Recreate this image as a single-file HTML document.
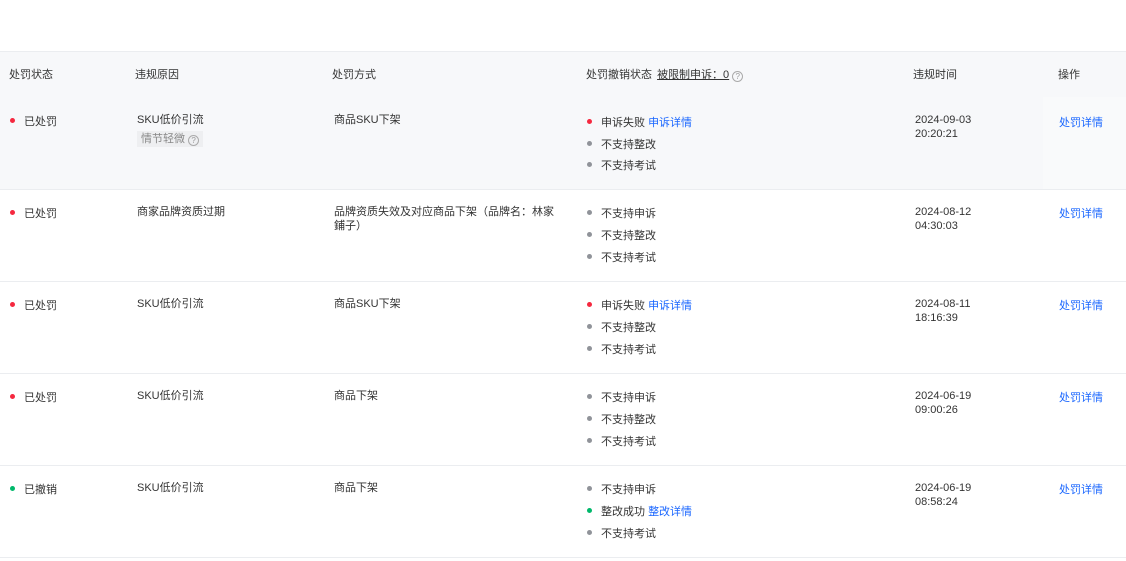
<!DOCTYPE html>
<html><head><meta charset="utf-8"><style>
*{margin:0;padding:0;box-sizing:border-box}
body{width:1126px;height:561px;background:#fff;font-family:"Liberation Sans","Noto Sans CJK SC",sans-serif;font-size:11px;color:#333;position:relative;overflow:hidden}
.a{position:absolute;white-space:nowrap;line-height:14px}
.hd{position:absolute;left:0;top:51px;width:1126px;height:138px;background:#f7f8fa;border-top:1px solid #ebedf0}
.fx{position:absolute;left:1043px;top:97px;width:83px;height:92px;background:#f9fafb}
.ln{position:absolute;left:0;width:1126px;height:1px;background:#ebedf0}
.d{display:inline-block;width:5px;height:5px;border-radius:50%;margin-right:9px;vertical-align:2px}
.r{background:#f5283f}.g{background:#909399}.gr{background:#00b86b}
.b{color:#1966ff}
.q{display:inline-block;width:11px;height:11px;border:1px solid #aaa;border-radius:50%;font-size:8px;line-height:9px;text-align:center;color:#999;vertical-align:-1px}
.tag{display:inline-block;background:#eeeff1;color:#888;padding:1px 4px;line-height:14px}
</style></head><body>
<div class="hd"></div><div class="fx"></div>
<div class="ln" style="top:189px"></div>
<div class="ln" style="top:281px"></div>
<div class="ln" style="top:373px"></div>
<div class="ln" style="top:465px"></div>
<div class="ln" style="top:557px"></div>

<div class="a" style="left:9px;top:68px">处罚状态</div>
<div class="a" style="left:135px;top:68px">违规原因</div>
<div class="a" style="left:332px;top:68px">处罚方式</div>
<div class="a" style="left:586px;top:68px">处罚撤销状态 <span style="text-decoration:underline;margin-left:2px">被限制申诉：0</span> <span class="q">?</span></div>
<div class="a" style="left:913px;top:68px">违规时间</div>
<div class="a" style="left:1058px;top:68px">操作</div>

<!-- row1 -->
<div class="a" style="left:10px;top:115px"><span class="d r"></span>已处罚</div>
<div class="a" style="left:137px;top:113px">SKU低价引流</div>
<div class="a" style="left:137px;top:131px"><span class="tag">情节轻微 <span class="q">?</span></span></div>
<div class="a" style="left:334px;top:113px">商品SKU下架</div>
<div class="a" style="left:587px;top:116px"><span class="d r"></span>申诉失败 <span class="b">申诉详情</span></div>
<div class="a" style="left:587px;top:138px"><span class="d g"></span>不支持整改</div>
<div class="a" style="left:587px;top:159px"><span class="d g"></span>不支持考试</div>
<div class="a" style="left:915px;top:113px">2024-09-03</div>
<div class="a" style="left:915px;top:127px">20:20:21</div>
<div class="a b" style="left:1059px;top:116px">处罚详情</div>

<!-- row2 -->
<div class="a" style="left:10px;top:207px"><span class="d r"></span>已处罚</div>
<div class="a" style="left:137px;top:205px">商家品牌资质过期</div>
<div class="a" style="left:334px;top:205px">品牌资质失效及对应商品下架（品牌名：林家</div>
<div class="a" style="left:334px;top:219px">鋪子）</div>
<div class="a" style="left:587px;top:207px"><span class="d g"></span>不支持申诉</div>
<div class="a" style="left:587px;top:229px"><span class="d g"></span>不支持整改</div>
<div class="a" style="left:587px;top:251px"><span class="d g"></span>不支持考试</div>
<div class="a" style="left:915px;top:205px">2024-08-12</div>
<div class="a" style="left:915px;top:219px">04:30:03</div>
<div class="a b" style="left:1059px;top:207px">处罚详情</div>

<!-- row3 -->
<div class="a" style="left:10px;top:299px"><span class="d r"></span>已处罚</div>
<div class="a" style="left:137px;top:297px">SKU低价引流</div>
<div class="a" style="left:334px;top:297px">商品SKU下架</div>
<div class="a" style="left:587px;top:299px"><span class="d r"></span>申诉失败 <span class="b">申诉详情</span></div>
<div class="a" style="left:587px;top:321px"><span class="d g"></span>不支持整改</div>
<div class="a" style="left:587px;top:343px"><span class="d g"></span>不支持考试</div>
<div class="a" style="left:915px;top:297px">2024-08-11</div>
<div class="a" style="left:915px;top:311px">18:16:39</div>
<div class="a b" style="left:1059px;top:299px">处罚详情</div>

<!-- row4 -->
<div class="a" style="left:10px;top:391px"><span class="d r"></span>已处罚</div>
<div class="a" style="left:137px;top:389px">SKU低价引流</div>
<div class="a" style="left:334px;top:389px">商品下架</div>
<div class="a" style="left:587px;top:391px"><span class="d g"></span>不支持申诉</div>
<div class="a" style="left:587px;top:413px"><span class="d g"></span>不支持整改</div>
<div class="a" style="left:587px;top:435px"><span class="d g"></span>不支持考试</div>
<div class="a" style="left:915px;top:389px">2024-06-19</div>
<div class="a" style="left:915px;top:403px">09:00:26</div>
<div class="a b" style="left:1059px;top:391px">处罚详情</div>

<!-- row5 -->
<div class="a" style="left:10px;top:483px"><span class="d gr"></span>已撤销</div>
<div class="a" style="left:137px;top:481px">SKU低价引流</div>
<div class="a" style="left:334px;top:481px">商品下架</div>
<div class="a" style="left:587px;top:483px"><span class="d g"></span>不支持申诉</div>
<div class="a" style="left:587px;top:505px"><span class="d gr"></span>整改成功 <span class="b">整改详情</span></div>
<div class="a" style="left:587px;top:527px"><span class="d g"></span>不支持考试</div>
<div class="a" style="left:915px;top:481px">2024-06-19</div>
<div class="a" style="left:915px;top:495px">08:58:24</div>
<div class="a b" style="left:1059px;top:483px">处罚详情</div>
</body></html>
